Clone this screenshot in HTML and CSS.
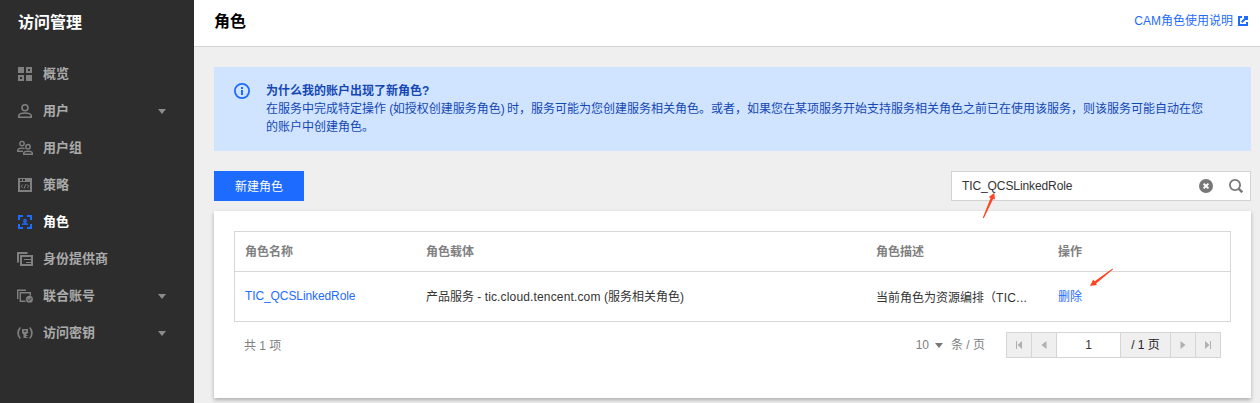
FILE: index.html
```html
<!DOCTYPE html>
<html lang="zh-CN">
<head>
<meta charset="utf-8">
<title>访问管理 - 角色</title>
<link rel="stylesheet" href="styles.css">
</head>
<body>
<div class="app">
  <aside class="sidebar">
    <h1 class="sidebar-title">访问管理</h1>
    <nav class="menu">
      <a class="menu-item"><svg class="icon" viewBox="0 0 16 16"><path fill="currentColor" fill-rule="evenodd" d="M1 1h6v6H1zM9 1h6v6H9zM11 3v2h2V3zM1 9h6v6H1zM3 11v2h2v-2zM9 9h6v6H9z"/></svg><span>概览</span></a>
      <a class="menu-item"><svg class="icon" viewBox="0 0 16 16" fill="none" stroke="currentColor" stroke-width="1.6"><circle cx="8" cy="4.7" r="3"/><path d="M1.8 14.2v-1.4c0-1.6 3-2.8 6.2-2.8s6.2 1.2 6.2 2.8v1.4z"/></svg><span>用户</span><i class="caret"></i></a>
      <a class="menu-item"><svg class="icon" viewBox="0 0 16 16" fill="none" stroke="currentColor" stroke-width="1.4"><circle cx="5" cy="3.6" r="2.2"/><path d="M6 11.3H.7v-1c0-1.300 2-2.200 4.300-2.200 1 0 1.900.1 2.700.5"/><circle cx="11" cy="6.700" r="2.200"/><path d="M6.700 14.300v-1c0-1.300 2-2.100 4.300-2.100s4.300.8 4.300 2.100v1z"/></svg><span>用户组</span></a>
      <a class="menu-item"><svg class="icon" viewBox="0 0 16 16"><path fill="currentColor" fill-rule="evenodd" d="M1 1h14v14H1zM3 5v8h10V5zM3 2v2h2V2zM6 2v2h2V2z"/><path d="M5.800 7.500 4.200 9.300l1.600 1.800M10.200 7.500l1.600 1.800-1.600 1.800M8.800 7.200l-1.600 4.300" fill="none" stroke="currentColor"/></svg><span>策略</span></a>
      <a class="menu-item active"><svg class="icon" viewBox="0 0 16 16"><path d="M6 2H2v4M10 2h4v4M2 10v4h4M14 10v4h-4" fill="none" stroke="currentColor" stroke-width="2"/><path fill="currentColor" opacity=".85" d="M8 4.800a2 2 0 0 1 1.200 3.600V9L11 9.700V11H5V9.700L6.800 9v-.6A2 2 0 0 1 8 4.800z"/></svg><span>角色</span></a>
      <a class="menu-item"><svg class="icon" viewBox="0 0 16 16" fill="none" stroke="currentColor"><path d="M1 11.500V2h9.500" stroke-width="2"/><path d="M4 5h11v9H4z" stroke-width="2"/><path d="M7 8.500h7M9 11.500h5"/></svg><span>身份提供商</span></a>
      <a class="menu-item"><svg class="icon" viewBox="0 0 16 16" fill="none" stroke="currentColor" stroke-width="1.400"><path d="M.7 11V2.200H9M8.500 13.300H3.300V4.700h10v3"/><circle cx="12.400" cy="11.200" r="3.500" fill="currentColor" stroke="none"/><path d="m10.500 11.300 1.400 1.300 2.400-2.600" stroke="#2d2d2d" stroke-width="1"/></svg><span>联合账号</span><i class="caret"></i></a>
      <a class="menu-item"><svg class="icon" viewBox="0 0 16 16" fill="none" stroke="currentColor"><path d="M3.300 2.500C.4 5.500.4 10.500 3.300 13.500M12.700 2.500c2.900 3 2.900 8 0 11" stroke-width="1.700"/><path fill="currentColor" stroke="none" fill-rule="evenodd" d="M5 4h6v4L9 9.500v.5h1.500v1H9v1h1.500v1H6.500V9.500L5 8zM6.800 5.500v1.300h2.400V5.500z"/></svg><span>访问密钥</span><i class="caret"></i></a>
    </nav>
  </aside>
  <main class="main">
    <header class="header">
      <h2 class="header-title">角色</h2>
      <a class="help">CAM角色使用说明<svg class="ext" viewBox="0 0 10 10" fill="none" stroke="currentColor" stroke-width="2"><path d="M4 1H1v8h8V6M6 1h3v3M9 1 3.700 6.300"/></svg></a>
    </header>
    <div class="content">
      <section class="notice">
        <svg class="info" viewBox="0 0 16 16"><circle cx="8" cy="8" r="7.100" fill="none" stroke="currentColor" stroke-width="1.800"/><path fill="currentColor" d="M7 4h2v2H7zM7 7h2v5H7z"/></svg>
        <div><strong>为什么我的账户出现了新角色?</strong><p>在服务中完成特定操作 <span class="tight">(</span>如授权创建服务角色<span class="tight">) </span>时，服务可能为您创建服务相关角色。或者，如果您在某项服务开始支持服务相关角色之前已在使用该服务，则该服务可能自动在您<br>的账户中创建角色。</p></div>
      </section>
      <div class="toolbar">
        <button class="primary">新建角色</button>
        <div class="search">
          <span class="search-text">TIC_QCSLinkedRole</span>
          <svg class="clear" viewBox="0 0 14 14"><circle cx="7" cy="7" r="7" fill="#777"/><path d="m4.600 4.600 4.800 4.800M9.400 4.600 4.600 9.400" stroke="#fff" stroke-width="2"/></svg>
          <svg class="lens" viewBox="0 0 14 14" fill="none" stroke="#777"><circle cx="6" cy="6" r="5.100" stroke-width="1.800"/><path d="m9.800 9.800 3.500 3.500" stroke-width="2.400"/></svg>
          <svg class="arrow arrow-search" viewBox="0 0 14 26"><path fill="#ff4423" d="M12.300 0 13 6.500 11.200 5.800 2.200 24.500Q1.200 26 .9 24.500L8.600 4.900 6.800 4z"/></svg>
        </div>
      </div>
      <section class="card">
        <div class="table">
          <div class="row head"><span>角色名称</span><span>角色载体</span><span>角色描述</span><span>操作</span></div>
          <div class="row body"><span class="name"><a class="link latin">TIC_QCSLinkedRole</a></span><span>产品服务 - <span class="domain">tic.cloud.tencent.com</span> (服务相关角色)</span><span class="low">当前角色为资源编排（<span class="dots">TIC...</span></span><span class="action"><a class="link">删除</a><svg class="arrow arrow-delete" viewBox="0 0 24 19"><path fill="#ff4423" d="M0 18 3.200 11.600 4.700 13.300 22.200.8Q24 .2 22.600 1.700L6.200 15.400 6.700 17.100z"/></svg></span></div>
        </div>
        <footer class="footer">
          <span class="total">共 1 项</span>
          <span class="size">10<i class="caret"></i>条 / 页</span>
          <div class="pager">
            <span class="cell"><svg viewBox="0 0 8 8"><path fill="currentColor" d="M1 0h1v8H1zM7 0v8L2.500 4z"/></svg></span>
            <span class="cell"><svg viewBox="0 0 8 8"><path fill="currentColor" d="M6.500 0v8L1.500 4z"/></svg></span>
            <span class="cell current">1</span>
            <span class="cell pages">/ 1 页</span>
            <span class="cell"><svg viewBox="0 0 8 8"><path fill="currentColor" d="M1.500 0v8l5-4z"/></svg></span>
            <span class="cell"><svg viewBox="0 0 8 8"><path fill="currentColor" d="M6 0h1v8H6zM1 0v8l4.500-4z"/></svg></span>
          </div>
        </footer>
      </section>
    </div>
  </main>
</div>
</body>
</html>
```
FILE: styles.css
```css
* { box-sizing: border-box; }
body { margin: 0; font: 12px/18px "Liberation Sans", "Noto Sans CJK SC", sans-serif; color: #333; background: #efefef; overflow: hidden; }
h1, h2, p { margin: 0; }
svg { display: block; flex: none; }
.app { display: flex; width: 1260px; height: 403px; }
.sidebar { width: 194px; flex: none; background: #2d2d2d; }
.sidebar-title { height: 44px; padding: 1px 0 0 18px; font-size: 16px; line-height: 44px; color: #fff; }
.menu { padding-top: 11px; }
.menu-item { display: flex; align-items: center; height: 37px; padding: 0 28px 0 17px; font-size: 13px; font-weight: bold; color: #aaa; }
.icon { width: 16px; height: 16px; margin-right: 10px; color: #808080; }
.active { color: #fff; }
.active .icon { color: #1e6bff; }
.caret { width: 0; height: 0; border: 4px solid transparent; border-top: 5px solid #8b8b8b; border-bottom: 0; }
.menu-item .caret { margin: 2px 0 0 auto; }
.main { flex: 1; min-width: 0; }
.header { display: flex; justify-content: space-between; height: 47px; padding: 0 12px 5px 20px; align-items: center; background: #fff; border-bottom: 1px solid #d5d5d5; }
.header-title { padding-top: 2px; font-size: 16px; line-height: 24px; color: #000; }
.help { display: flex; align-items: center; gap: 5px; color: #1e6bff; }
.ext { width: 10px; height: 10px; }
.content { padding: 20px 9px 0 20px; }
.notice { display: flex; gap: 16px; height: 84px; padding: 15px 0 0 20px; background: #d0e4ff; color: #1447b4; white-space: nowrap; }
.notice strong { display: block; }
.tight { letter-spacing: -.6px; }
.info { width: 16px; height: 16px; margin-top: 1px; color: #1e6bff; }
.toolbar { display: flex; justify-content: space-between; margin: 20px 0 10px; }
.primary { width: 90px; height: 30px; padding: 2px 0 0; border: 0; background: #1e6bff; color: #fff; font: inherit; }
.search { position: relative; display: flex; align-items: center; width: 300px; height: 30px; padding: 0 7px 0 10px; border: 1px solid #d3d3d3; background: #fff; }
.search-text { flex: 1; letter-spacing: -.1px; }
.clear { width: 14px; height: 14px; margin-right: 16px; }
.lens { width: 14px; height: 14px; }
.arrow { position: absolute; z-index: 1; }
.arrow-search { left: 30px; top: 21px; width: 14px; height: 26px; }
.card { height: 187px; padding: 20px; background: #fff; box-shadow: 0 2px 4px rgba(0, 0, 0, .28); }
.table { height: 91px; border: 1px solid #d7d7d7; }
.row { display: grid; grid-template-columns: 181px 450px 182px 1fr; align-items: center; padding-left: 10px; }
.head { height: 40px; padding-top: 1px; border-bottom: 1px solid #d7d7d7; font-weight: bold; color: #808080; }
.body { height: 49px; }
.name { padding-bottom: 2px; }
.low { padding-top: 2px; }
.link { color: #1e6bff; }
.latin { letter-spacing: -.1px; }
.domain { letter-spacing: .15px; }
.dots { letter-spacing: .3px; }
.action { position: relative; }
.arrow-delete { left: 32px; top: -20px; width: 24px; height: 19px; }
.footer { display: flex; align-items: center; height: 46px; padding: 0 10px; color: #808080; }
.total { padding-top: 2px; }
.size { display: flex; align-items: center; margin-left: auto; }
.size .caret { margin: 0 8px 0 6px; border-top-color: #777; }
.pager { display: flex; height: 26px; margin-left: 21px; border: 1px solid #d5d5d5; background: #efefef; }
.cell { display: flex; align-items: center; justify-content: center; width: 25px; border-right: 1px solid #d5d5d5; color: #b0b0b0; }
.cell:last-child { width: 24px; border-right: 0; }
.cell svg { width: 8px; height: 8px; }
.current { width: 64px; background: #fff; color: #333; }
.pages { width: 50px; color: #222; }
```
